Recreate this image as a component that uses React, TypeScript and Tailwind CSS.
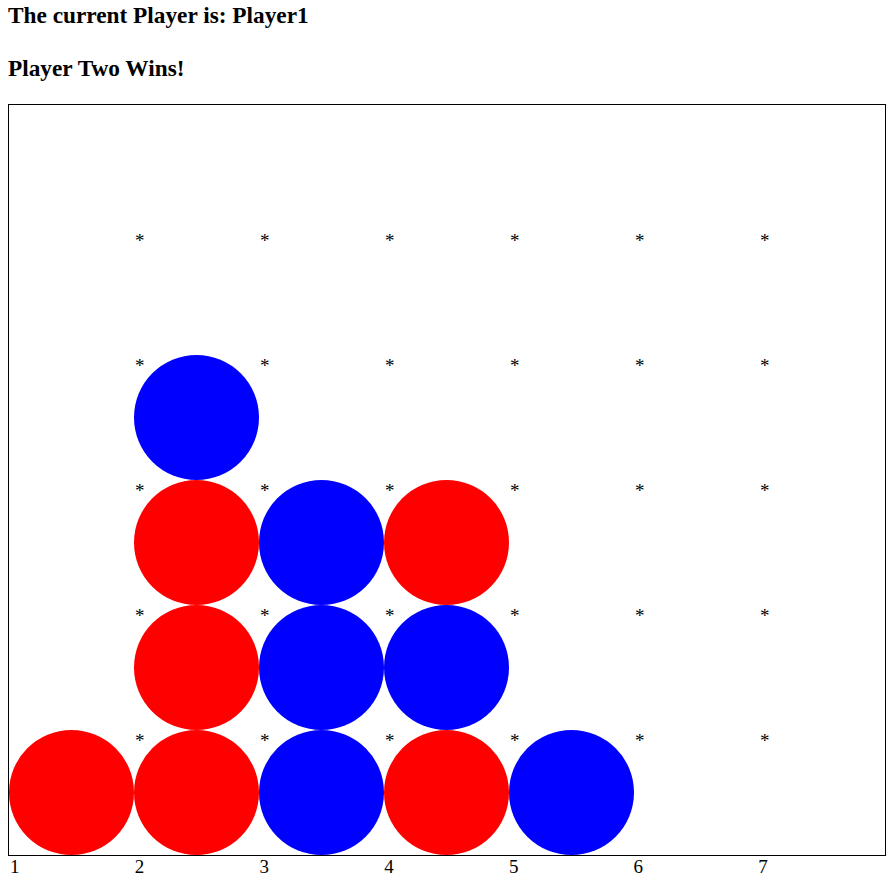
import React from "react";

type Cell = "" | "R" | "B";

const board: Cell[][] = [
  ["", "", "", "", "", "", ""],
  ["", "", "", "", "", "", ""],
  ["", "B", "", "", "", "", ""],
  ["", "R", "B", "R", "", "", ""],
  ["", "R", "B", "B", "", "", ""],
  ["R", "R", "B", "R", "B", "", ""],
];

export default function App() {
  return (
    <div
      className="min-h-[878px] bg-white px-2 text-black"
      style={{ fontFamily: '"Liberation Serif", "Times New Roman", serif' }}
    >
      <h3 className="pt-[2px] text-[23.3px] font-bold leading-[26px]">
        The current Player is: Player1
      </h3>
      <h3 className="mt-[27px] text-[23.3px] font-bold leading-[26px]">
        Player Two Wins!
      </h3>
      <div className="mt-[23px] w-[878px] border border-black">
        <div className="grid h-[750px] grid-cols-[repeat(7,125px)] grid-rows-[repeat(6,125px)]">
          {board.map((row, r) =>
            row.map((cell, c) => (
              <div key={`${r}-${c}`} className="relative h-[125px] w-[125px]">
                {cell === "R" && (
                  <div className="h-[125px] w-[125px] rounded-full bg-[#ff0000]" />
                )}
                {cell === "B" && (
                  <div className="h-[125px] w-[125px] rounded-full bg-[#0000ff]" />
                )}
                {r >= 1 && c >= 1 && (
                  <span className="absolute left-[1px] top-0 text-[19px] leading-[21px]">
                    *
                  </span>
                )}
              </div>
            ))
          )}
        </div>
      </div>
      <div className="ml-[2px] flex text-[19px] leading-[21px]">
        {[1, 2, 3, 4, 5, 6, 7].map((n) => (
          <div key={n} className="w-[125px]">
            {n}
          </div>
        ))}
      </div>
    </div>
  );
}
